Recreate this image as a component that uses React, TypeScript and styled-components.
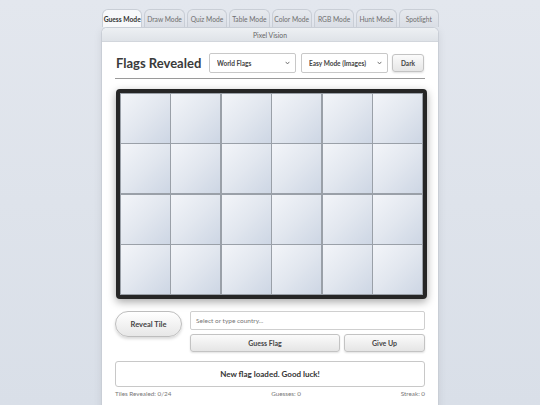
import React from 'react';
import styled, { createGlobalStyle } from 'styled-components';

const GlobalStyle = createGlobalStyle`
  html, body {
    margin: 0;
    padding: 0;
    background: linear-gradient(180deg, #e3e7ee 0%, #d9dfe8 100%);
    font-family: 'Lato', 'Open Sans', sans-serif;
    height: 405px;
    overflow: hidden;
  }
`;

const chevron =
  "url(\"data:image/svg+xml;utf8,<svg xmlns='http://www.w3.org/2000/svg' width='6' height='4' viewBox='0 0 6 4'><path d='M0.8 0.8 L3 3 L5.2 0.8' fill='none' stroke='%23555' stroke-width='0.9'/></svg>\")";

const Page = styled.div`
  width: 338px;
  margin: 0 auto;
  padding-top: 9px;
`;

const Tabs = styled.div`
  display: flex;
  gap: 2px;
  padding: 0 0 0 1px;
`;

const Tab = styled.div<{ active?: boolean }>`
  flex: 1 1 0;
  min-width: 0;
  height: 18px;
  display: flex;
  align-items: center;
  justify-content: center;
  font-size: 6.7px;
  font-weight: ${p => (p.active ? 700 : 400)};
  color: ${p => (p.active ? '#333' : '#6f6f6f')};
  background: ${p => (p.active ? '#f7f8fa' : 'linear-gradient(180deg, #e6e9ee, #dadee5)')};
  border: 1px solid #c9ced6;
  border-bottom: none;
  border-radius: 6px 6px 0 0;
  box-sizing: border-box;
  white-space: nowrap;
`;

const Window = styled.div`
  border: 1px solid #c9ced6;
  border-bottom: none;
  border-radius: 6px 6px 0 0;
  background: #fff;
  box-shadow: 0 2px 8px rgba(0, 0, 0, 0.08);
  overflow: hidden;
`;

const TitleBar = styled.div`
  height: 13px;
  display: flex;
  align-items: center;
  justify-content: center;
  font-size: 6.8px;
  color: #666;
  background: linear-gradient(180deg, #edf0f3, #dfe3e8);
  border-bottom: 1px solid #d2d6dc;
`;

const Content = styled.div`
  padding: 11px 13px 0 13px;
  height: 370px;
`;

const Header = styled.div`
  display: flex;
  align-items: center;
  padding: 0 1px 5px 1px;
  border-bottom: 1px solid #9a9a9a;
`;

const Title = styled.h1`
  flex: 1;
  min-width: 0;
  margin: 0;
  font-size: 13px;
  font-weight: 700;
  color: #3a3a3a;
  white-space: nowrap;
`;

const Select = styled.select<{ w: number }>`
  flex-shrink: 0;
  width: ${p => p.w}px;
  height: 20px;
  margin-left: 5px;
  font-family: 'Lato', sans-serif;
  font-size: 6.5px;
  font-weight: 700;
  color: #444;
  background: #fff ${chevron} no-repeat right 5px center;
  background-size: 5px 3.5px;
  appearance: none;
  border: 1px solid #c8c8c8;
  border-radius: 2px;
  padding: 0 4px 0 7px;
`;

const SmallButton = styled.button`
  flex-shrink: 0;
  width: 32px;
  height: 18px;
  margin-left: 4px;
  padding: 0;
  font-family: 'Lato', sans-serif;
  font-size: 6.5px;
  font-weight: 700;
  color: #444;
  background: linear-gradient(180deg, #fbfbfb, #e6e6e6);
  border: 1px solid #c3c3c3;
  border-radius: 3px;
  box-shadow: 0 1px 2px rgba(0, 0, 0, 0.12);
`;

const Board = styled.div`
  margin: 10px 0 0 1px;
  width: 311px;
  height: 210px;
  box-sizing: border-box;
  border: 4px solid #262626;
  border-radius: 4px;
  background: #9aa0a8;
  box-shadow: 0 3px 8px rgba(0, 0, 0, 0.35);
  display: grid;
  grid-template-columns: repeat(6, 1fr);
  grid-template-rows: repeat(4, 1fr);
  gap: 1.5px;
  padding: 1px;
`;

const Tile = styled.div`
  background: linear-gradient(135deg, #f3f5f9 0%, #e2e7ef 50%, #cdd6e4 100%);
`;

const Controls = styled.div`
  display: flex;
  gap: 8px;
  margin-top: 12px;
`;

const RevealButton = styled.button`
  flex-shrink: 0;
  width: 67px;
  height: 26px;
  font-family: 'Lato', sans-serif;
  font-size: 7.5px;
  font-weight: 700;
  color: #444;
  background: linear-gradient(180deg, #ffffff, #e7e7e7);
  border: 1px solid #bdbdbd;
  border-radius: 13px;
  box-shadow: 0 2px 3px rgba(0, 0, 0, 0.15);
`;

const GuessArea = styled.div`
  flex: 1;
  display: grid;
  grid-template-columns: 150px 1fr;
  gap: 4px;
`;

const Input = styled.input`
  grid-column: 1 / span 2;
  height: 19px;
  box-sizing: border-box;
  padding: 0 5px;
  font-family: 'Lato', sans-serif;
  font-size: 6.5px;
  color: #777;
  border: 1px solid #cfcfcf;
  border-radius: 2px;
  &::placeholder {
    color: #777;
  }
`;

const WideButton = styled.button`
  height: 18px;
  font-family: 'Lato', sans-serif;
  font-size: 7px;
  font-weight: 700;
  color: #444;
  background: linear-gradient(180deg, #fbfbfb, #e5e5e5);
  border: 1px solid #c3c3c3;
  border-radius: 3px;
  box-shadow: 0 1px 2px rgba(0, 0, 0, 0.12);
`;

const Message = styled.div`
  margin-top: 9px;
  height: 24px;
  display: flex;
  align-items: center;
  justify-content: center;
  font-size: 8px;
  font-weight: 700;
  color: #333;
  border: 1px solid #c8c8c8;
  border-radius: 3px;
`;

const Stats = styled.div`
  display: flex;
  justify-content: space-between;
  margin-top: 3px;
  font-size: 6.3px;
  color: #777;
`;

const tabs = ['Guess Mode', 'Draw Mode', 'Quiz Mode', 'Table Mode', 'Color Mode', 'RGB Mode', 'Hunt Mode', 'Spotlight'];

export default function App() {
  return (
    <Page>
      <GlobalStyle />
      <Tabs>
        {tabs.map((t, i) => (
          <Tab key={t} active={i === 0}>{t}</Tab>
        ))}
      </Tabs>
      <Window>
        <TitleBar>Pixel Vision</TitleBar>
        <Content>
          <Header>
            <Title>Flags Revealed</Title>
            <Select w={87} defaultValue="world">
              <option value="world">World Flags</option>
            </Select>
            <Select w={87} defaultValue="easy">
              <option value="easy">Easy Mode (Images)</option>
            </Select>
            <SmallButton>Dark</SmallButton>
          </Header>
          <Board>
            {Array.from({ length: 24 }).map((_, i) => (
              <Tile key={i} />
            ))}
          </Board>
          <Controls>
            <RevealButton>Reveal Tile</RevealButton>
            <GuessArea>
              <Input placeholder="Select or type country..." />
              <WideButton>Guess Flag</WideButton>
              <WideButton>Give Up</WideButton>
            </GuessArea>
          </Controls>
          <Message>New flag loaded. Good luck!</Message>
          <Stats>
            <span>Tiles Revealed: 0/24</span>
            <span>Guesses: 0</span>
            <span>Streak: 0</span>
          </Stats>
        </Content>
      </Window>
    </Page>
  );
}
